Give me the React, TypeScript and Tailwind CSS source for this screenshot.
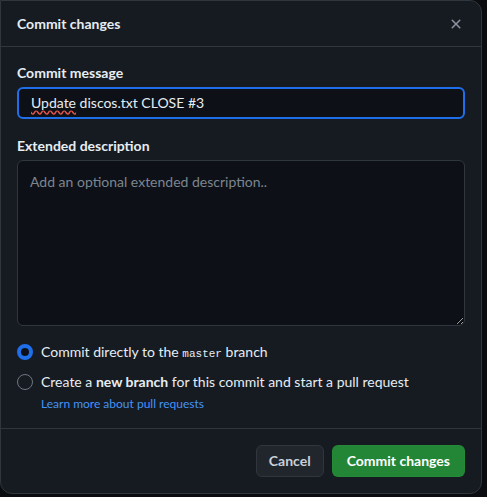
import React, { useState } from 'react';

const font = { fontFamily: '"Segoe UI", Lato, sans-serif' };

function CloseIcon() {
  return (
    <svg width="16" height="16" viewBox="0 0 16 16" fill="currentColor">
      <path d="M3.72 3.72a.75.75 0 0 1 1.06 0L8 6.94l3.22-3.22a.749.749 0 0 1 1.275.326.749.749 0 0 1-.215.734L9.06 8l3.22 3.22a.749.749 0 0 1-.326 1.275.749.749 0 0 1-.734-.215L8 9.06l-3.22 3.22a.751.751 0 0 1-1.042-.018.751.751 0 0 1-.018-1.042L6.94 8 3.72 4.78a.75.75 0 0 1 0-1.06Z" />
    </svg>
  );
}

function Radio({ checked, onClick }: { checked: boolean; onClick: () => void }) {
  return (
    <button
      type="button"
      onClick={onClick}
      className={
        checked
          ? 'w-4 h-4 shrink-0 rounded-full border-[4px] border-[#1f6feb] bg-[#0d1117]'
          : 'w-4 h-4 shrink-0 rounded-full border border-[#6e7681] bg-transparent'
      }
    />
  );
}

export default function App() {
  const [mode, setMode] = useState<'direct' | 'branch'>('direct');

  return (
    <div className="min-h-screen w-full bg-[#0a0c10]" style={font}>
      <div className="w-[482px] h-[494px] flex flex-col bg-[#161b22] border border-[#30363d] rounded-b-xl rounded-tr-xl text-[#e6edf3] text-sm">
        {/* Header */}
        <div className="h-[46px] shrink-0 flex items-center justify-between pl-4 pr-[17px] border-b border-[#30363d]">
          <h2 className="font-bold text-sm">Commit changes</h2>
          <button className="text-[#8b949e]">
            <CloseIcon />
          </button>
        </div>

        {/* Body */}
        <div className="flex-1 px-4 pt-4 flex flex-col">
          <label className="font-bold leading-5">Commit message</label>
          <div className="mt-1 h-8 shrink-0 w-full rounded-md border-2 border-[#1f6feb] bg-[#0d1117] flex items-center pl-3">
            <span>
              <span className="underline decoration-wavy decoration-[#e5534b] underline-offset-2">Update</span> discos.txt CLOSE #3
            </span>
          </div>

          <label className="font-bold leading-5 mt-[17px]">Extended description</label>
          <textarea
            className="mt-1 h-[166px] shrink-0 w-full rounded-md border border-[#30363d] bg-[#0d1117] px-3 py-[11px] text-sm text-[#e6edf3] placeholder-[#7d8590] outline-none resize-y"
            placeholder="Add an optional extended description.."
            style={font}
          />

          <div className="mt-4 flex items-center gap-2 h-5">
            <Radio checked={mode === 'direct'} onClick={() => setMode('direct')} />
            <span>
              Commit directly to the{' '}
              <code className="text-[11px]" style={{ fontFamily: '"Liberation Mono", monospace' }}>master</code>{' '}
              branch
            </span>
          </div>
          <div className="mt-2.5 flex items-center gap-2 h-5">
            <Radio checked={mode === 'branch'} onClick={() => setMode('branch')} />
            <span>
              Create a <strong className="font-bold">new branch</strong> for this commit and start a pull request
            </span>
          </div>
          <a className="ml-6 mt-0.5 text-xs text-[#4493f8] leading-5">Learn more about pull requests</a>
        </div>

        {/* Footer */}
        <div className="h-[65px] shrink-0 border-t border-[#30363d] flex items-center justify-end gap-2 px-4">
          <button className="h-8 px-3 rounded-md border border-[#30363d] bg-[#21262d] text-[#c9d1d9] font-bold">
            Cancel
          </button>
          <button className="h-8 px-[14px] rounded-md border border-[#2ea04326] bg-[#238636] text-white font-bold">
            Commit changes
          </button>
        </div>
      </div>
    </div>
  );
}
